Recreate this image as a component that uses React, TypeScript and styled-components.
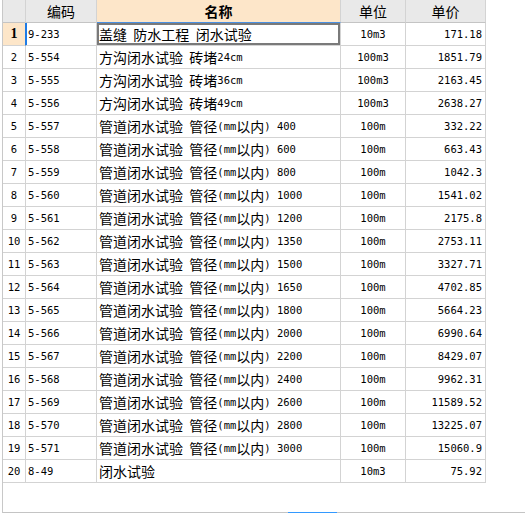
import React from "react";
import styled, { createGlobalStyle, css } from "styled-components";

const GlobalStyle = createGlobalStyle`
  html, body { margin: 0; padding: 0; background: #ffffff; }
  body { font-family: "Noto Sans CJK SC", "DejaVu Sans", sans-serif; color: #000; }
  * { box-sizing: border-box; }
`;

const GRID_LINE = "#d3d3d3";
const COLS = "23px 71px 244px 65px 80px";

const Frame = styled.div`
  width: 523px;
  height: 513px;
  margin-left: 2px;
  border-left: 1px solid #c8c8c8;
  display: flex;
  flex-direction: column;
`;

const Table = styled.div`
  display: grid;
  grid-template-columns: ${COLS};
  grid-auto-rows: 23px;
  width: 483px;
`;

const HeadCell = styled.div<{ $active?: boolean; $bold?: boolean }>`
  display: flex;
  align-items: center;
  justify-content: center;
  background: ${(p) => (p.$active ? "#fde6c9" : "#e9e9e9")};
  border-right: 1px solid ${GRID_LINE};
  border-bottom: 1px solid ${(p) => (p.$active ? "#4a90e2" : "#c4c4c4")};
  font-size: 14px;
  font-weight: ${(p) => (p.$bold ? 700 : 400)};
  line-height: 1;
`;

const Cell = styled.div<{ $align?: "left" | "center" | "right" }>`
  display: flex;
  align-items: center;
  justify-content: ${(p) =>
    p.$align === "center" ? "center" : p.$align === "right" ? "flex-end" : "flex-start"};
  padding: ${(p) => (p.$align === "right" ? "0 3px 0 0" : p.$align === "center" ? "0" : "0 0 0 2px")};
  border-right: 1px solid ${GRID_LINE};
  border-bottom: 1px solid ${GRID_LINE};
  white-space: nowrap;
  overflow: hidden;
  line-height: 1;
`;

const NumCell = styled(Cell)<{ $active?: boolean }>`
  font-family: "DejaVu Sans Mono", monospace;
  font-size: 10.5px;
  ${(p) =>
    p.$active &&
    css`
      background: #fde6c9;
      border-right-color: #1e7be6;
      font-family: "Liberation Serif", serif;
      font-weight: 700;
      font-size: 14px;
    `}
`;

const CodeCell = styled(Cell)<{ $active?: boolean }>`
  font-family: "DejaVu Sans Mono", monospace;
  font-size: 10.5px;
  ${(p) => p.$active && css`box-shadow: inset 1px 0 0 #1e7be6;`}
`;

const NameCell = styled(Cell)<{ $active?: boolean }>`
  font-size: 14px;
  ${(p) => p.$active && css`box-shadow: inset 0 0 0 2px #7a7a7a;`}
`;

const MonoCell = styled(Cell)`
  font-family: "DejaVu Sans Mono", monospace;
  font-size: 10.5px;
`;

const Latin = styled.span`
  font-family: "DejaVu Sans Mono", monospace;
  font-size: 10.5px;
  white-space: pre;
`;

const Han = styled.span`
  font-family: "Noto Sans CJK SC", sans-serif;
  font-size: 14px;
`;

const Filler = styled.div`
  flex: 1;
`;

const Track = styled.div`
  height: 1px;
  background: #c4c4c4;
  display: flex;
`;

const Thumb = styled.div`
  margin-left: 285px;
  width: 49px;
  height: 1px;
  background: #3399ff;
`;

type Row = [string, string, string, string];

const pipe = "管道闭水试验 管径(mm以内) ";
const rows: Row[] = [
  ["9-233", "盖缝 防水工程 闭水试验", "10m3", "171.18"],
  ["5-554", "方沟闭水试验 砖堵24cm", "100m3", "1851.79"],
  ["5-555", "方沟闭水试验 砖堵36cm", "100m3", "2163.45"],
  ["5-556", "方沟闭水试验 砖堵49cm", "100m3", "2638.27"],
  ["5-557", pipe + "400", "100m", "332.22"],
  ["5-558", pipe + "600", "100m", "663.43"],
  ["5-559", pipe + "800", "100m", "1042.3"],
  ["5-560", pipe + "1000", "100m", "1541.02"],
  ["5-561", pipe + "1200", "100m", "2175.8"],
  ["5-562", pipe + "1350", "100m", "2753.11"],
  ["5-563", pipe + "1500", "100m", "3327.71"],
  ["5-564", pipe + "1650", "100m", "4702.85"],
  ["5-565", pipe + "1800", "100m", "5664.23"],
  ["5-566", pipe + "2000", "100m", "6990.64"],
  ["5-567", pipe + "2200", "100m", "8429.07"],
  ["5-568", pipe + "2400", "100m", "9962.31"],
  ["5-569", pipe + "2600", "100m", "11589.52"],
  ["5-570", pipe + "2800", "100m", "13225.07"],
  ["5-571", pipe + "3000", "100m", "15060.9"],
  ["8-49", "闭水试验", "10m3", "75.92"],
];

function MixedText({ text }: { text: string }) {
  const parts = text.match(/[\x00-\x7F]+|[^\x00-\x7F]+/g) || [];
  return (
    <>
      {parts.map((p, i) =>
        /^[\x00-\x7F]+$/.test(p) ? <Latin key={i}>{p}</Latin> : <Han key={i}>{p}</Han>
      )}
    </>
  );
}

export default function App() {
  return (
    <>
      <GlobalStyle />
      <Frame>
        <Table>
          <HeadCell />
          <HeadCell>编码</HeadCell>
          <HeadCell $active $bold>名称</HeadCell>
          <HeadCell>单位</HeadCell>
          <HeadCell>单价</HeadCell>
          {rows.map((r, i) => {
            const active = i === 0;
            return (
              <React.Fragment key={i}>
                <NumCell $align="center" $active={active}>{i + 1}</NumCell>
                <CodeCell $active={active}>{r[0]}</CodeCell>
                <NameCell $active={active}>
                  <MixedText text={r[1]} />
                </NameCell>
                <MonoCell $align="center">{r[2]}</MonoCell>
                <MonoCell $align="right">{r[3]}</MonoCell>
              </React.Fragment>
            );
          })}
        </Table>
        <Filler />
        <Track>
          <Thumb />
        </Track>
      </Frame>
    </>
  );
}
